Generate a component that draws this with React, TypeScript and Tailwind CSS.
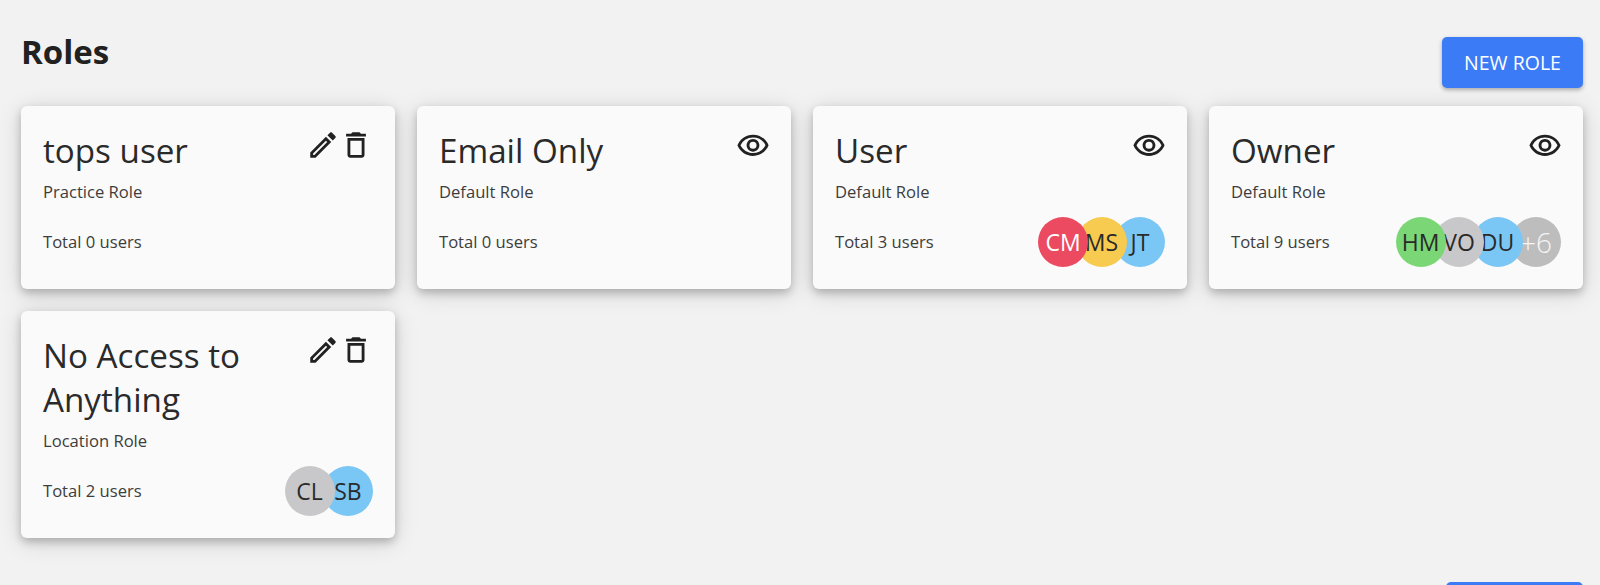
import { MdOutlineEdit, MdOutlineDelete, MdOutlineVisibility } from "react-icons/md";

type Av = { t: string; bg: string; fg?: string; big?: boolean };
type Role = { name: string; kind: string; total: number; editable: boolean; avatars: Av[] };

const gray = "bg-[#c8c8ca]";
const blue = "bg-[#7ac7f5]";

const roles: Role[] = [
  { name: "tops user", kind: "Practice Role", total: 0, editable: true, avatars: [] },
  { name: "Email Only", kind: "Default Role", total: 0, editable: false, avatars: [] },
  {
    name: "User",
    kind: "Default Role",
    total: 3,
    editable: false,
    avatars: [
      { t: "CM", bg: "bg-[#eb4a60]", fg: "text-white" },
      { t: "MS", bg: "bg-[#f7ca50]" },
      { t: "JT", bg: blue },
    ],
  },
  {
    name: "Owner",
    kind: "Default Role",
    total: 9,
    editable: false,
    avatars: [
      { t: "HM", bg: "bg-[#7bd676]" },
      { t: "VO", bg: gray },
      { t: "DU", bg: blue },
      { t: "+6", bg: "bg-[#bdbdbd]", fg: "text-[#f5f5f5]", big: true },
    ],
  },
  {
    name: "No Access to Anything",
    kind: "Location Role",
    total: 2,
    editable: true,
    avatars: [
      { t: "CL", bg: gray },
      { t: "SB", bg: blue },
    ],
  },
];

function Card({ role }: { role: Role }) {
  return (
    <div className="flex flex-col rounded-[6px] bg-[#fafafa] pl-[22px] pr-[22px] pt-[23px] pb-[22px] shadow-[0_4px_8px_rgba(0,0,0,0.22),0_4px_24px_rgba(0,0,0,0.14)]">
      <div className="flex items-start justify-between">
        <div className="w-[230px] text-[33.2px] leading-[44px] text-[#2a2a2a]">{role.name}</div>
        {role.editable ? (
          <div className="mt-[-2px] flex items-center text-[#212121]">
            <MdOutlineEdit className="h-[34px] w-[34px]" />
            <MdOutlineDelete className="mt-[1px] ml-[-1px] h-[34px] w-[34px]" />
          </div>
        ) : (
          <div className="mr-[-1px] text-[#212121]">
            <MdOutlineVisibility className="h-[34px] w-[34px]" />
          </div>
        )}
      </div>
      <div className="mt-[9px] text-[16.6px] leading-[20px] text-[#3d3d3d]">{role.kind}</div>
      <div className="mt-[15px] flex h-[50px] items-center justify-between">
        <div className="text-[16.6px] leading-[20px] text-[#3d3d3d]">Total {role.total} users</div>
        <div className="flex flex-row-reverse">
          {[...role.avatars].reverse().map((a, i) => (
            <div
              key={a.t}
              className={`relative flex h-[50px] w-[50px] items-center justify-center rounded-full ${a.big ? "font-light text-[28px]" : "text-[23px]"} ${a.bg} ${a.fg ?? "text-[#2a2a2a]"} ${i === 0 ? "" : "mr-[-11.5px]"}`}
            >
              {a.t}
            </div>
          ))}
        </div>
      </div>
    </div>
  );
}

export default function App() {
  return (
    <div className="h-[585px] overflow-hidden bg-[#f2f2f2] pl-[21px] pr-[17px] font-['Open_Sans',sans-serif]">
      <div className="flex items-start justify-between pt-[37px]">
        <h1 className="mt-[-7px] text-[33px] font-bold leading-[44px] text-[#212121]">Roles</h1>
        <button className="flex h-[51px] w-[141px] items-center justify-center rounded-[5px] bg-[#3b7cf6] text-[19.5px] text-white shadow-[0_2px_4px_rgba(0,0,0,0.3)]">
          NEW ROLE
        </button>
      </div>
      <div className="mt-[18px] grid grid-cols-4 items-start gap-[22px]">
        {roles.map((r) => (
          <Card key={r.name} role={r} />
        ))}
      </div>
      <div className="mt-[44px] flex justify-end">
        <div className="h-[51px] w-[137px] rounded-[5px] bg-[#3b7cf6]" />
      </div>
    </div>
  );
}
